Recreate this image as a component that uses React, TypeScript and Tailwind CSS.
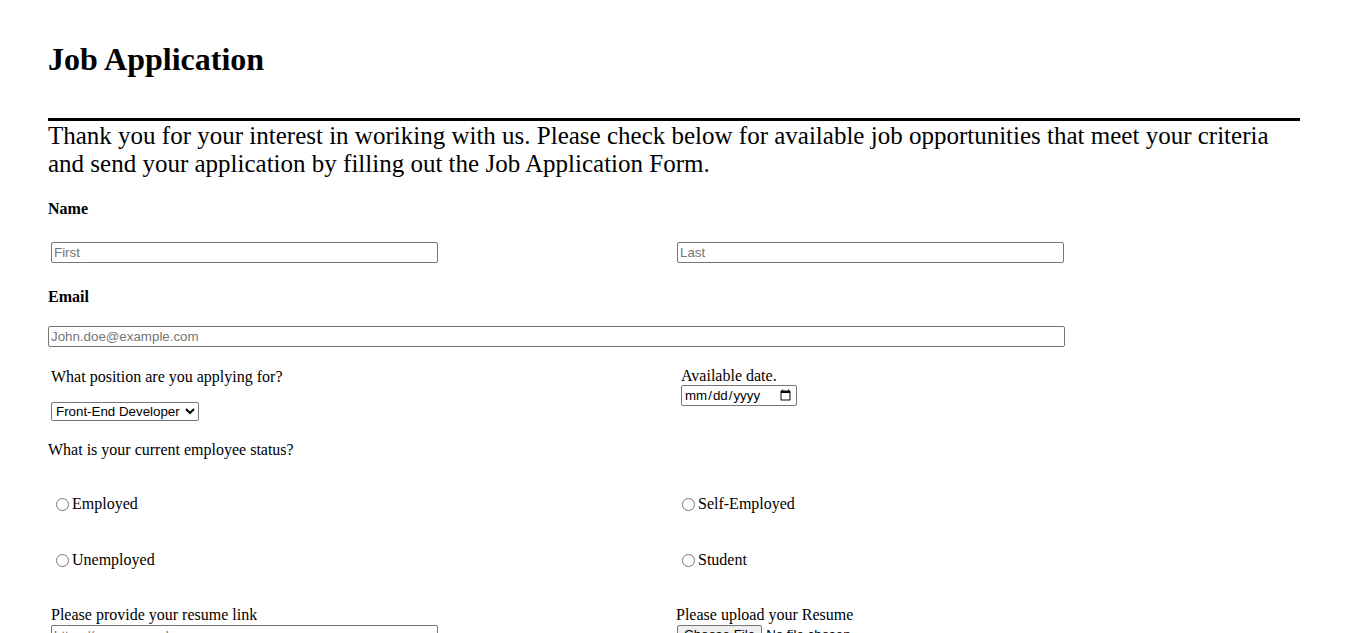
import React from "react";

const inputCls =
  "border border-[#767676] rounded-[2px] px-[2px] py-[1px] bg-white text-black font-['Liberation_Sans',Arial,sans-serif] text-[13.33px] leading-[15px] placeholder:text-[#757575] outline-none";

function Radio({ label, name }: { label: string; name: string }) {
  return (
    <label className="flex items-center ml-[8px] h-[18px] leading-[18px]">
      <input type="radio" name={name} className="w-[13px] h-[13px] mr-[3px] m-0" />
      <span>{label}</span>
    </label>
  );
}

export default function App() {
  return (
    <div className="px-[48px] pb-[40px] font-['Liberation_Serif','Times_New_Roman',serif] text-[16px] text-black bg-white min-h-screen">
      <div className="w-[1252px]">
        <h1 className="pt-[41px] text-[32px] font-bold leading-[37px]">Job Application</h1>
        <div className="mt-[40px] h-[3px] bg-black" />
        <p className="mt-[1px] text-[25px] leading-[28px]">
          Thank you for your interest in woriking with us. Please check below for available job opportunities that meet your criteria and send your application by filling out the Job Application Form.
        </p>

        <div className="mt-[22px] font-bold leading-[18px]">Name</div>
        <div className="grid grid-cols-2 mt-[24px]">
          <div>
            <input type="text" placeholder="First" className={`${inputCls} ml-[3px] w-[387px] h-[21px] block`} />
          </div>
          <div>
            <input type="text" placeholder="Last" className={`${inputCls} ml-[3px] w-[387px] h-[21px] block`} />
          </div>
        </div>

        <div className="mt-[25px] font-bold leading-[18px]">Email</div>
        <input
          type="email"
          placeholder="John.doe@example.com"
          className={`${inputCls} mt-[20px] w-[1017px] h-[21px] block`}
        />

        <div className="grid grid-cols-2 mt-[20px]">
          <div>
            <div className="ml-[3px] mt-[1px] leading-[18px]">What position are you applying for?</div>
            <select
              defaultValue="fe"
              className="ml-[3px] mt-[16px] block w-[148px] h-[19px] border border-[#767676] rounded-[2px] bg-white text-black font-['Liberation_Sans',Arial,sans-serif] text-[13.33px]"
            >
              <option value="fe">Front-End Developer</option>
              <option value="be">Back-End Developer</option>
            </select>
          </div>
          <div>
            <div className="ml-[7px] leading-[18px]">Available date.</div>
            <input
              type="date"
              className="ml-[7px] block w-[116px] h-[21px] border border-[#767676] rounded-[2px] px-[2px] bg-white text-black font-['Liberation_Sans',Arial,sans-serif] text-[13.33px]"
            />
          </div>
        </div>

        <div className="mt-[20px] leading-[18px]">What is your current employee status?</div>

        <div className="grid grid-cols-2 mt-[36px] gap-y-[38px]">
          <Radio label="Employed" name="status" />
          <Radio label="Self-Employed" name="status" />
          <Radio label="Unemployed" name="status" />
          <Radio label="Student" name="status" />
        </div>

        <div className="grid grid-cols-2 mt-[37px]">
          <div>
            <div className="ml-[3px] leading-[18px]">Please provide your resume link</div>
            <input
              type="url"
              placeholder="https://www.example.com"
              className={`${inputCls} ml-[3px] mt-[1px] w-[387px] h-[21px] block`}
            />
          </div>
          <div>
            <div className="ml-[2px] leading-[18px]">Please upload your Resume</div>
            <input
              type="file"
              className="ml-[3px] mt-[1px] block font-['Liberation_Sans',Arial,sans-serif] text-[13.33px] leading-[16px] file:mr-[4px] file:border file:border-[#767676] file:rounded-[2px] file:bg-[#efefef] file:px-[6px] file:py-[1px] file:text-black"
            />
          </div>
        </div>
      </div>
    </div>
  );
}
